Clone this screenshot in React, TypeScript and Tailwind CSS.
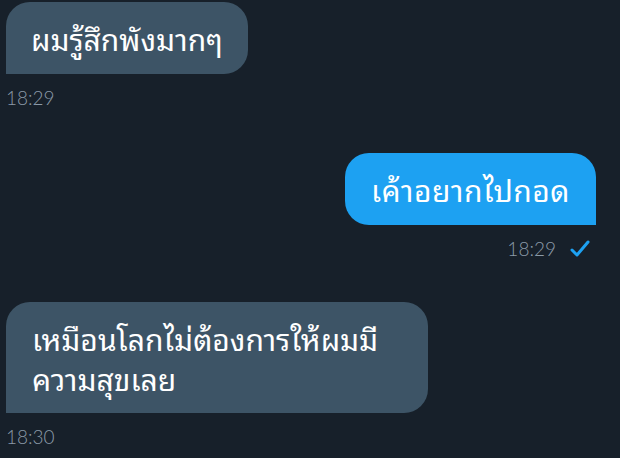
import React from "react";

const thai = { fontFamily: '"Noto Sans Thai Looped", "Noto Sans Thai UI", "Noto Sans Thai", "Noto Sans", sans-serif' };
const timeFont = { fontFamily: 'Lato, "Open Sans", sans-serif' };

export default function App() {
  return (
    <div className="w-[620px] h-[458px] bg-[#17202a] overflow-hidden relative" style={thai}>
      <div className="flex flex-col pt-[2px] px-[6px]">
        <div className="self-start bg-[#3d5466] text-white text-[30px] leading-[40px] px-[25px] rounded-[24px] rounded-bl-none h-[72px] flex items-center">
          ผมรู้สึกพังมากๆ
        </div>
        <div className="text-[#8b9aa8] text-[19px] font-light mt-[12px] h-[24px] leading-[24px]" style={timeFont}>18:29</div>

        <div className="self-end mr-[18px] mt-[43px] w-[251px] bg-[#1da1f2] text-white text-[30px] leading-[40px] rounded-[24px] rounded-br-none h-[72px] flex items-center justify-center tracking-[0.5px]">
          เค้าอยากไปกอด
        </div>
        <div className="self-end mr-[24px] mt-[12px] flex items-center gap-[14px] h-[24px]">
          <span className="text-[#8b9aa8] text-[19px] font-light leading-[24px]" style={timeFont}>18:29</span>
          <svg width="20" height="18" viewBox="0 0 20 18">
            <path d="M2 10 L7 15 L18 2" fill="none" stroke="#1da1f2" strokeWidth="3" strokeLinecap="round" strokeLinejoin="round" />
          </svg>
        </div>

        <div className="self-start mt-[41px] w-[422px] bg-[#3d5466] text-white text-[30px] leading-[40px] pl-[26px] pr-[16px] pt-[16px] pb-[15px] rounded-[24px] rounded-bl-none">
          เหมือนโลกไม่ต้องการให้ผมมี ความสุขเลย
        </div>
        <div className="text-[#8b9aa8] text-[19px] font-light mt-[12px] h-[24px] leading-[24px]" style={timeFont}>18:30</div>
      </div>
    </div>
  );
}
